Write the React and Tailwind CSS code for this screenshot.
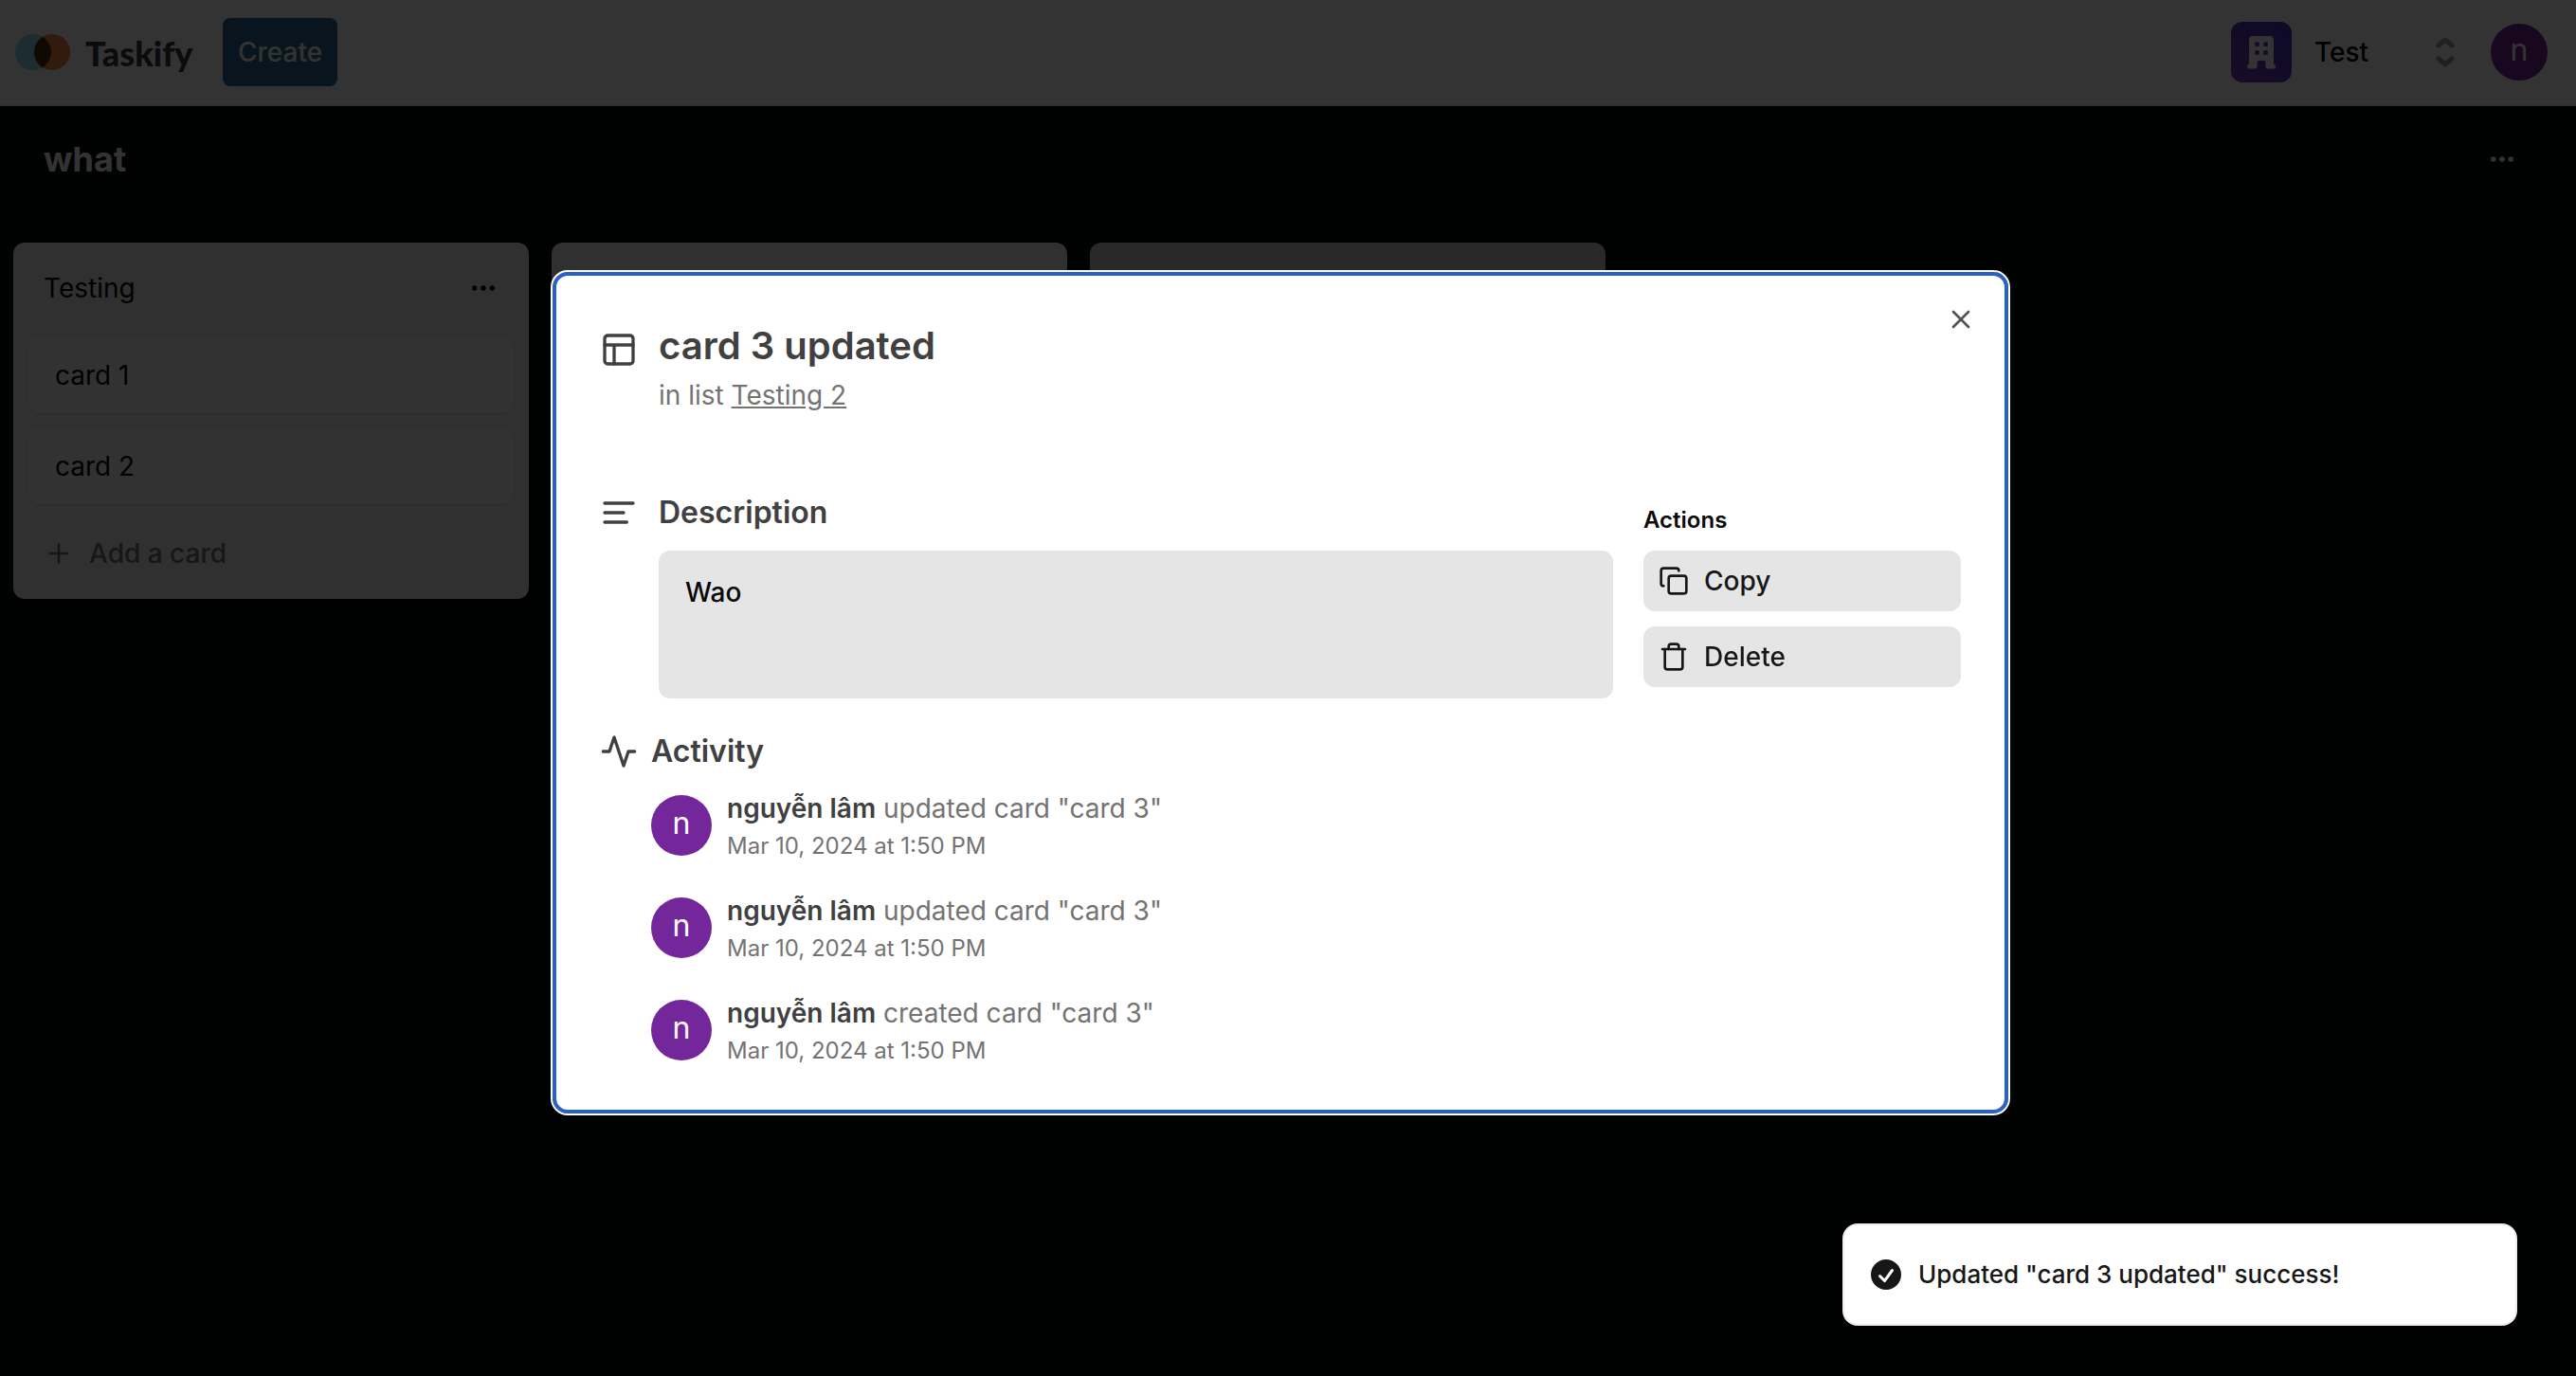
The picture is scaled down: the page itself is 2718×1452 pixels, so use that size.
import { MoreHorizontal, Plus, X, Copy, Trash } from "lucide-react";
import { HiMiniCheckCircle } from "react-icons/hi2";

const cards = ["card 1", "card 2"];

const activity = [
  { id: 1, who: "nguyễn lâm", what: 'updated card "card 3"', when: "Mar 10, 2024 at 1:50 PM" },
  { id: 2, who: "nguyễn lâm", what: 'updated card "card 3"', when: "Mar 10, 2024 at 1:50 PM" },
  { id: 3, who: "nguyễn lâm", what: 'created card "card 3"', when: "Mar 10, 2024 at 1:50 PM" },
];

function Stroke({ className, children }) {
  return (
    <svg
      viewBox="0 0 24 24"
      fill="none"
      stroke="currentColor"
      strokeWidth="2"
      strokeLinecap="round"
      strokeLinejoin="round"
      className={className}
      aria-hidden="true"
    >
      {children}
    </svg>
  );
}

function LayoutIcon({ className }) {
  return (
    <Stroke className={className}>
      <rect width="18" height="18" x="3" y="3" rx="2" />
      <path d="M3 9h18M9 21V9" />
    </Stroke>
  );
}

function AlignLeftIcon({ className }) {
  return (
    <Stroke className={className}>
      <path d="M21 6H3M15 12H3M17 18H3" />
    </Stroke>
  );
}

function ActivityIcon({ className }) {
  return (
    <Stroke className={className}>
      <path d="M22 12h-4l-3 9L9 3l-3 9H2" />
    </Stroke>
  );
}

function Logo() {
  return (
    <a href="#" className="flex items-center gap-4">
      <svg viewBox="0 0 58 38" className="h-[38px] w-[58px]" aria-hidden="true">
        <circle cx="19" cy="19" r="19" fill="#8cd9f5" />
        <circle cx="39" cy="19" r="19" fill="#f98142" />
        <path d="M29 2.85a19 19 0 0 1 0 32.3a19 19 0 0 1 0-32.3z" fill="#4a2a0f" />
      </svg>
      <span className="w-[113px] whitespace-nowrap pt-0.5 font-['Lato',sans-serif] text-4xl font-black text-[#3a3a3a]">
        Taskify
      </span>
    </a>
  );
}

function OrgLogo() {
  return (
    <span className="flex size-16 items-center justify-center rounded-xl bg-linear-to-tr from-[#7c3ab8] to-[#3a2fc4]">
      <svg viewBox="0 0 30 35" className="h-[35px] w-[30px]" aria-hidden="true">
        <path
          fill="#fff"
          fillRule="evenodd"
          d="M6 0h18a4 4 0 0 1 4 4v26a2 2 0 0 1 2 2v1a1.500 1.500 0 0 1-1.500 1.500h-7a2 2 0 0 1-2-2V28a2 2 0 0 0-2-2h-5a2 2 0 0 0-2 2v4.500a2 2 0 0 1-2 2h-7A1.500 1.500 0 0 1 0 33v-1a2 2 0 0 1 2-2V4a4 4 0 0 1 4-4zM8.300 6.600v4.400h4.400V6.600zM17.300 6.600v4.400h4.400V6.600zM8.300 15.300v4.400h4.400v-4.400zM17.300 15.300v4.400h4.400v-4.400z"
        />
      </svg>
    </span>
  );
}

function Header() {
  return (
    <header className="flex h-28 items-center border-b-2 border-neutral-200 bg-white pl-4 pr-[30px]">
      <Logo />
      <button type="button" className="ml-8 h-[72px] rounded-lg bg-[#2d6997] px-4 text-[28px] font-medium text-white">
        Create
      </button>
      <button type="button" className="ml-auto flex items-center text-left">
        <OrgLogo />
        <span className="ml-6 w-32 text-[28px] font-medium text-black">Test</span>
        <svg
          viewBox="0 0 20 32"
          className="h-8 w-5 text-neutral-400"
          fill="none"
          stroke="currentColor"
          strokeWidth="5"
          strokeLinecap="round"
          strokeLinejoin="round"
          aria-hidden="true"
        >
          <path d="M3 9l7-6 7 6M3 23l7 6 7-6" />
        </svg>
      </button>
      <button
        type="button"
        aria-label="Account"
        className="ml-[38px] size-[60px] rounded-full bg-[#73279b] pb-1 text-[32px] leading-none text-white"
      >
        n
      </button>
    </header>
  );
}

function Board() {
  return (
    <main>
      <div className="flex h-28 items-center justify-between pl-[46px] pr-[62px] text-white">
        <h1 className="text-4xl font-bold">what</h1>
        <button type="button" aria-label="Board options">
          <MoreHorizontal className="size-8" />
        </button>
      </div>
      <ol className="flex items-start gap-6 pl-3.5 pt-8">
        <li className="w-[544px] rounded-xl bg-[#f1f1f1] pb-3">
          <div className="flex h-24 items-center justify-between px-8">
            <h2 className="text-[28px] text-black">Testing</h2>
            <button type="button" aria-label="List options">
              <MoreHorizontal className="size-8" />
            </button>
          </div>
          <ol className="mt-1 flex flex-col gap-4 px-4">
            {cards.map((card) => (
              <li key={card} className="rounded-xl bg-[#fbfbfb] px-7 py-5 text-[28px] leading-10 text-black shadow-sm">
                {card}
              </li>
            ))}
          </ol>
          <button
            type="button"
            className="mt-4 flex h-[72px] items-center gap-4 pl-8 text-[28px] font-medium text-neutral-500"
          >
            <Plus className="size-8" />
            Add a card
          </button>
        </li>
        <li className="h-64 w-[544px] rounded-xl bg-[#f1f1f1]" />
        <li className="h-32 w-[544px] rounded-xl bg-[#cccccc]" />
      </ol>
    </main>
  );
}

function CardDialog() {
  return (
    <div
      role="dialog"
      aria-modal="true"
      aria-labelledby="card-title"
      className="relative w-full max-w-[1536px] rounded-2xl border-4 border-[#2861c9] bg-white px-[46px] pb-[42px] pt-11 outline-2 outline-white"
    >
      <button type="button" aria-label="Close" className="absolute right-[30px] top-[30px] text-[#535353]">
        <X className="size-8" />
      </button>

      <div className="flex items-start gap-[22px] text-neutral-700">
        <LayoutIcon className="mt-3.5 size-10 shrink-0" />
        <div className="flex-1">
          <input
            id="card-title"
            aria-label="Card title"
            defaultValue="card 3 updated"
            className="block h-15 w-3/4 bg-transparent text-[40px] font-semibold outline-none"
          />
          <p className="mt-0.5 text-[28px] leading-10 text-neutral-500">
            in list <span className="underline">Testing 2</span>
          </p>
        </div>
      </div>

      <div className="mt-20 grid grid-cols-4 gap-8">
        <div className="col-span-3">
          <section className="flex items-start gap-[22px] text-neutral-700">
            <AlignLeftIcon className="mt-1 size-10 shrink-0" />
            <div className="flex-1">
              <h3 className="mb-4 text-[32px] font-semibold leading-12">Description</h3>
              <button
                type="button"
                className="flex min-h-[156px] w-full items-start rounded-xl bg-neutral-200 px-7 py-6 text-left text-[28px] font-medium leading-10 text-neutral-950"
              >
                Wao
              </button>
            </div>
          </section>

          <section className="mt-8 flex items-start gap-3.5 text-neutral-700">
            <ActivityIcon className="mt-1 size-10 shrink-0" />
            <div className="flex-1">
              <h3 className="mb-4 text-[32px] font-semibold leading-12">Activity</h3>
              <ol className="flex flex-col gap-7">
                {activity.map((item) => (
                  <li key={item.id} className="flex items-start gap-4">
                    <span className="mt-1.5 flex size-16 items-center justify-center rounded-full bg-[#73279b] pb-1 text-[32px] leading-none text-white">
                      n
                    </span>
                    <div className="text-neutral-500">
                      <p className="text-[28px] leading-10">
                        <span className="font-semibold text-neutral-700">{item.who}</span> {item.what}
                      </p>
                      <p className="text-2xl leading-10">{item.when}</p>
                    </div>
                  </li>
                ))}
              </ol>
            </div>
          </section>
        </div>

        <section className="flex flex-col gap-4 pt-4">
          <h3 className="text-2xl font-semibold leading-8 text-neutral-950">Actions</h3>
          <button
            type="button"
            className="flex h-16 items-center gap-4 rounded-xl bg-neutral-200 px-4 text-[28px] font-medium text-neutral-900"
          >
            <Copy className="size-8" />
            Copy
          </button>
          <button
            type="button"
            className="flex h-16 items-center gap-4 rounded-xl bg-neutral-200 px-4 text-[28px] font-medium text-neutral-900"
          >
            <Trash className="size-8" />
            Delete
          </button>
        </section>
      </div>
    </div>
  );
}

function Toast() {
  return (
    <div
      role="status"
      className="fixed bottom-[53px] right-[62px] flex w-[712px] items-center gap-3.5 rounded-2xl border-2 border-[#ededed] bg-white px-6 py-8 text-[26px] font-medium leading-10 text-neutral-900"
    >
      <HiMiniCheckCircle className="size-10" />
      Updated "card 3 updated" success!
    </div>
  );
}

export default function App() {
  return (
    <div className="min-h-screen bg-[#000508] font-['Inter',sans-serif]">
      <Header />
      <Board />
      <div className="fixed inset-0 flex items-center justify-center bg-black/80 pr-4 pt-2.5">
        <CardDialog />
      </div>
      <Toast />
    </div>
  );
}
